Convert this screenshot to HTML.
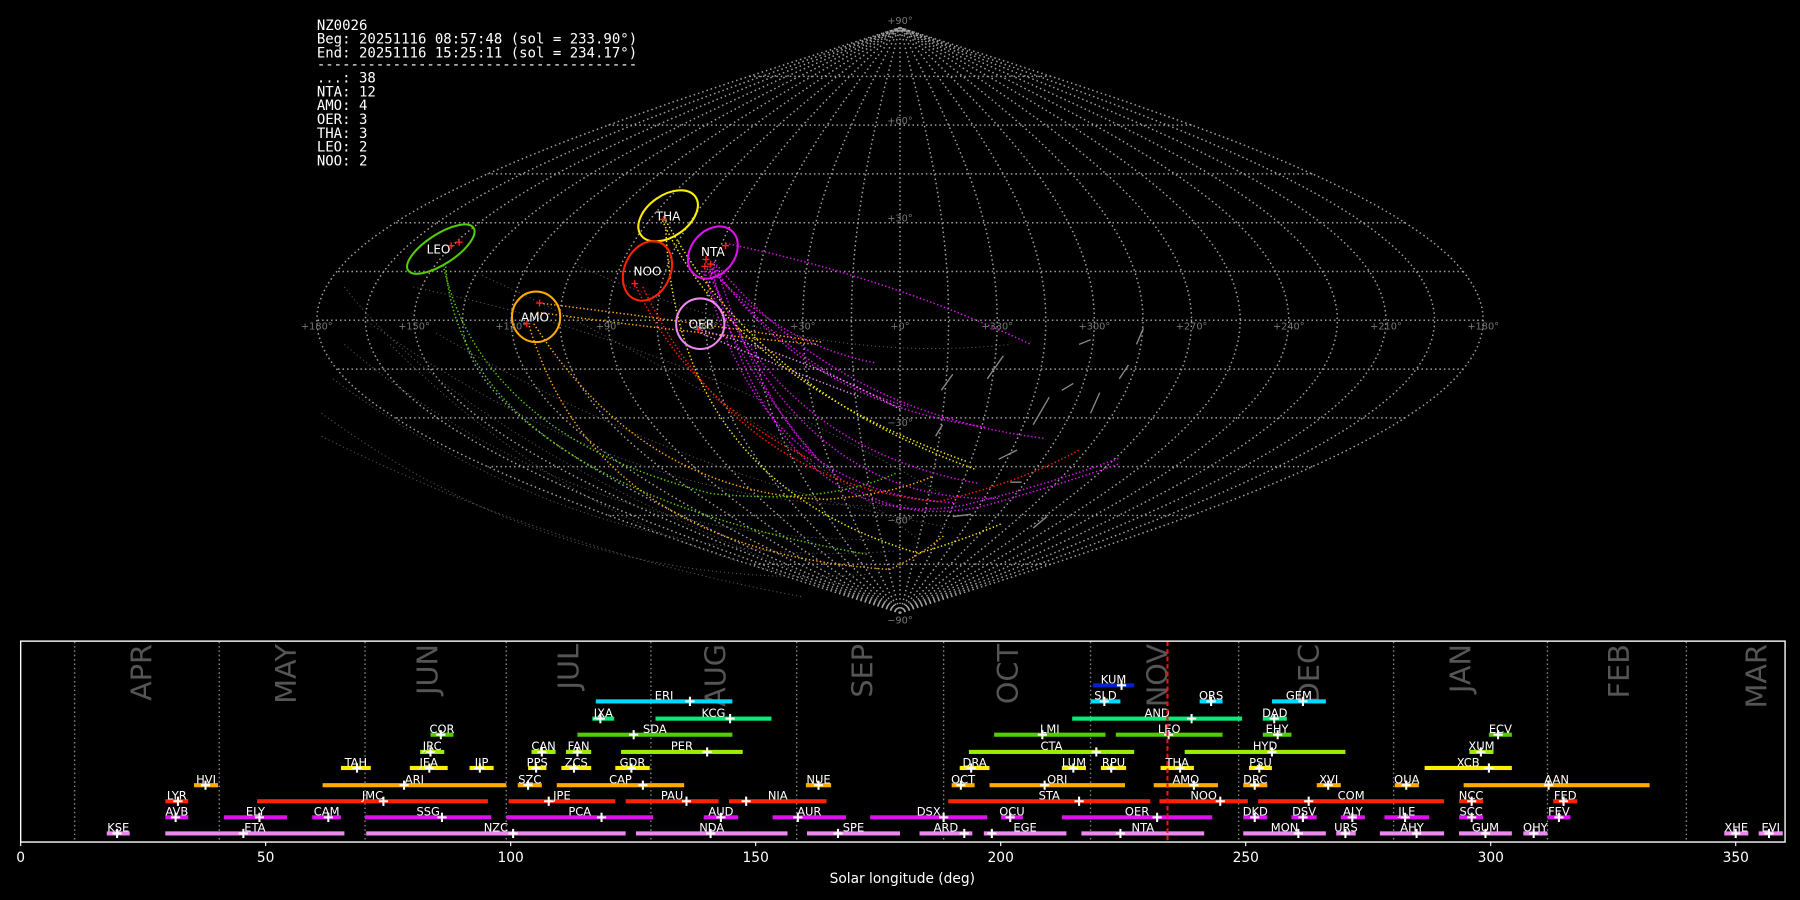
<!DOCTYPE html>
<html><head><meta charset="utf-8"><style>
html,body{margin:0;padding:0;background:#000;width:1800px;height:900px;overflow:hidden}
svg{display:block}
.sans{font-family:"DejaVu Sans","Liberation Sans",sans-serif}
.mono{font-family:"DejaVu Sans Mono","Liberation Mono",monospace}
</style></head><body>
<svg id="s" width="1800" height="900" viewBox="0 0 1568 784" xmlns="http://www.w3.org/2000/svg" class="sans">
<rect width="1568" height="784" fill="#000"/>
<g id="grid" fill="none" stroke="#a0a0a0" stroke-width="1.3" stroke-dasharray="1.3 2.6"></g>
<g id="bg" fill="none" stroke="#555" stroke-width="0.9" stroke-dasharray="1 2.5">
<path d="M300,300 Q500,470 760,470"/><path d="M290,330 Q520,500 780,480"/><path d="M320,280 Q560,450 790,440"/>
<path d="M280,360 Q500,520 760,500"/><path d="M360,250 Q600,300 820,430"/><path d="M420,240 Q620,330 800,470"/>
<path d="M300,250 Q400,380 700,500"/><path d="M340,300 Q520,480 740,510"/><path d="M500,230 Q700,320 880,300"/>
<path d="M280,380 Q480,480 700,520"/><path d="M380,290 Q600,420 830,460"/>
</g>
<g fill="none" stroke-width="1.3" stroke-dasharray="1.2 2">
<path stroke="#dd11ee" d="M632,212 Q770,240 898,300"/>
<path stroke="#dd11ee" d="M616,232 Q680,300 762,316"/>
<path stroke="#dd11ee" d="M618,232 Q700,330 791,354"/>
<path stroke="#dd11ee" d="M620,230 Q700,350 858,372"/>
<path stroke="#dd11ee" d="M622,228 Q730,360 911,382"/>
<path stroke="#dd11ee" d="M616,234 Q680,390 852,421"/>
<path stroke="#dd11ee" d="M614,236 Q660,430 833,438"/>
<path stroke="#dd11ee" d="M618,236 Q700,440 871,434"/>
<path stroke="#dd11ee" d="M620,234 Q680,470 840,440 Q920,420 975,399"/>
<path stroke="#dd11ee" d="M624,232 Q700,480 860,440 Q930,420 975,404"/>
<path stroke="#dd11ee" d="M612,236 Q650,330 712,399"/>
<path stroke="#ffee00" d="M577,192 Q640,330 842,402"/>
<path stroke="#ffee00" d="M580,192 Q660,340 850,409"/>
<path stroke="#ffee00" d="M580,200 Q590,420 800,482 Q840,470 873,456"/>
<path stroke="#ffaa00" d="M470,264 Q600,280 716,298"/>
<path stroke="#ffaa00" d="M468,272 Q600,290 712,300"/>
<path stroke="#ffaa00" d="M461,284 Q520,480 775,496 Q800,485 823,466"/>
<path stroke="#ffaa00" d="M465,282 Q560,430 720,435 Q780,430 812,415"/>
<path stroke="#55cc00" d="M388,229 Q400,420 756,483"/>
<path stroke="#55cc00" d="M386,231 Q420,380 620,430 Q720,440 781,412"/>
<path stroke="#ff2200" d="M553,247 Q600,350 708,401"/>
<path stroke="#ff2200" d="M560,250 Q640,420 817,437 Q890,420 940,392"/>
<path stroke="#ee88ee" d="M608,287 Q700,310 785,357"/>
<path stroke="#ee88ee" d="M610,290 Q680,320 750,346"/>
</g>
<g stroke="#888" stroke-width="1.2">
<path d="M820,340 l10,-14 M860,330 l14,-20 M900,370 l14,-24 M925,340 l10,-6 M870,400 l16,-8 M950,360 l8,-18 M975,330 l8,-12 M830,450 l16,-2 M940,300 l10,-4 M990,300 l6,-14 M815,380 l6,-10 M900,460 l12,-10 M880,420 l10,0"/>
</g>
<g fill="none" stroke-width="1.8">
<ellipse cx="384" cy="217" rx="34" ry="13" transform="rotate(-33 384 217)" stroke="#55cc00"/>
<ellipse cx="582" cy="188" rx="29" ry="18" transform="rotate(-35 582 188)" stroke="#ffee00"/>
<ellipse cx="621" cy="220" rx="25" ry="19" transform="rotate(-50 621 220)" stroke="#dd11ee"/>
<ellipse cx="564" cy="236" rx="20" ry="27" transform="rotate(25 564 236)" stroke="#ff2200"/>
<ellipse cx="467" cy="276" rx="21" ry="22" stroke="#ffaa00"/>
<ellipse cx="610" cy="282" rx="21" ry="22" stroke="#ee88ee"/>
</g>
<g fill="#fff" font-size="10.5" text-anchor="middle">
<text x="382" y="221">LEO</text><text x="582" y="192">THA</text><text x="621" y="223">NTA</text>
<text x="564" y="240">NOO</text><text x="466" y="280">AMO</text><text x="611" y="286">OER</text>
</g>
<g stroke="#ff2020" stroke-width="1.2">
<path d="M390,214h6m-3,-3v6 M397,211h6m-3,-3v6 M575,191h6m-3,-3v6 M550,247h6m-3,-3v6 M629,214h6m-3,-3v6 M612,226h6m-3,-3v6 M616,230h6m-3,-3v6 M611,232h6m-3,-3v6 M467,264h6m-3,-3v6 M456,282h6m-3,-3v6 M605,287h6m-3,-3v6"/>
</g>
<g fill="#777" font-size="8.5" text-anchor="middle" id="glab">
<text x="784" y="21">+90°</text><text x="784" y="108">+60°</text><text x="784" y="193">+30°</text>
<text x="784" y="371">−30°</text><text x="784" y="456">−60°</text><text x="784" y="543">−90°</text>
</g>
<g class="mono" fill="#fff" font-size="12.2">
<text x="276" y="26">NZ0026</text>
<text x="276" y="38">Beg: 20251116 08:57:48 (sol = 233.90°)</text>
<text x="276" y="50">End: 20251116 15:25:11 (sol = 234.17°)</text>
<text x="276" y="60">--------------------------------------</text>
<text x="276" y="72">...: 38</text>
<text x="276" y="84">NTA: 12</text>
<text x="276" y="96">AMO: 4</text>
<text x="276" y="108">OER: 3</text>
<text x="276" y="120">THA: 3</text>
<text x="276" y="132">LEO: 2</text>
<text x="276" y="144">NOO: 2</text>
</g>
<g id="months"></g>
<g id="bars"></g>
<line x1="1017" y1="559" x2="1017" y2="733" stroke="#ff1010" stroke-width="1.8" stroke-dasharray="4 2.5"/>
<rect x="18" y="558.5" width="1537" height="175" fill="none" stroke="#fff" stroke-width="1.2"/>
<g id="ticks" fill="#fff" font-size="12" text-anchor="middle"></g>
<text x="786" y="769" fill="#fff" font-size="12" text-anchor="middle">Solar longitude (deg)</text>
</svg>
<script>
var NS="http://www.w3.org/2000/svg";
function el(t,a,p,txt){var e=document.createElementNS(NS,t);for(var k in a)e.setAttribute(k,a[k]);if(txt!=null)e.textContent=txt;p.appendChild(e);return e;}
var g=document.getElementById('grid');
var cx=784,cy=279,RX=508/180,RY=255/90;
function P(l,p){return [cx-l*Math.cos(p*Math.PI/180)*RX, cy-p*RY];}
for(var l=-180;l<=180;l+=15){var d="";for(var p=-90;p<=90;p+=2){var q=P(l,p);d+=(p==-90?"M":"L")+q[0].toFixed(1)+","+q[1].toFixed(1);}el('path',{d:d},g);}
for(var p=-75;p<=75;p+=15){var a=P(-180,p),b=P(180,p);el('path',{d:"M"+a[0]+","+a[1]+"L"+b[0]+","+b[1]},g);}
var gl=document.getElementById('glab');
var labs=["+180","+150","+120","+90","+60","+30","+0","+330","+300","+270","+240","+210","+180"];
for(var i=0;i<13;i++){el('text',{x:276+i*84.67,y:287},gl,labs[i]+"°");}
var m=document.getElementById('months');
[65,191,318,441,567,694,822,950,1079,1214,1348,1469].forEach(function(x){el('line',{x1:x,y1:559,x2:x,y2:733,stroke:"#888","stroke-width":1.2,"stroke-dasharray":"1.3 2.5"},m);});
[["APR",123],["MAY",249],["JUN",372],["JUL",495],["AUG",623],["SEP",751],["OCT",878],["NOV",1008],["DEC",1140],["JAN",1272],["FEB",1410],["MAR",1530]].forEach(function(a){el('text',{transform:"translate("+(a[1]+9)+",561) rotate(-90)","text-anchor":"end",fill:"#555","font-size":"25"},m,a[0]);});
var C={c:"#00d8ff",s:"#00ee77",g:"#55cc00",l:"#99ee00",y:"#ffee00",o:"#ffaa00",r:"#ff2200",m:"#dd11ee",p:"#ee88ee",b:"#0022cc"};
var R=[
[597,"b",[["KUM",952,988,977]]],
[611,"c",[["ERI",519,638,601],["SLD",950,976,962],["ORS",1045,1065,1055],["GEM",1108,1155,1135]]],
[626,"s",[["JXA",516,535,523],["KCG",571,672,636],["AND",934,1082,1038],["DAD",1100,1121,1110]]],
[640,"g",[["COR",375,395,384],["SDA",503,638,552],["LMI",866,963,908],["LEO",972,1065,1018],["EHY",1100,1125,1113],["ECV",1297,1317,1305]]],
[655,"l",[["JRC",366,387,375],["CAN",463,484,472],["FAN",493,515,503],["PER",541,647,616],["CTA",844,988,955],["HYD",1032,1172,1108],["XUM",1280,1301,1290]]],
[669,"y",[["TAH",297,323,311],["JEA",357,390,374],["JIP",409,430,418],["PPS",460,476,467],["ZCS",489,515,500],["GDR",536,566,550],["DRA",836,862,846],["LUM",925,946,935],["RPU",959,981,968],["THA",1011,1040,1028],["PSU",1088,1108,1097],["XCB",1241,1317,1297]]],
[684,"o",[["HVI",169,190,179],["ARI",281,441,352],["SZC",451,472,460],["CAP",485,596,560],["NUE",702,724,713],["OCT",829,849,837],["ORI",862,980,910],["AMO",1005,1061,1040],["DRC",1083,1104,1093],["XVI",1147,1168,1157],["OUA",1215,1236,1225],["AAN",1275,1437,1349]]],
[698,"r",[["LYR",144,164,155],["JMC",224,425,334],["JPE",443,536,478],["PAU",545,626,598],["NIA",635,720,650],["STA",826,1002,940],["NOO",1010,1087,1063],["COM",1096,1258,1140],["NCC",1271,1292,1282],["FED",1353,1374,1362]]],
[712,"m",[["AVB",144,164,153],["ELY",195,250,226],["CAM",272,297,286],["SSG",318,428,385],["PCA",441,569,524],["AUD",613,643,628],["AUR",673,737,695],["DSX",758,860,822],["OCU",872,891,880],["OER",925,1056,1008],["DKD",1083,1104,1093],["DSV",1125,1147,1135],["ALY",1168,1189,1178],["JLE",1206,1245,1224],["SCC",1271,1292,1282],["FEV",1348,1368,1358]]],
[726,"p",[["KSE",93,113,102],["ETA",144,300,212],["NZC",319,545,447],["NDA",554,686,619],["SPE",703,784,730],["ARD",801,847,840],["EGE",857,929,864],["NTA",942,1049,976],["MON",1083,1155,1131],["URS",1164,1181,1172],["AHY",1202,1258,1234],["GUM",1271,1317,1294],["OHY",1327,1348,1336],["XHE",1502,1523,1512],["EVI",1532,1553,1541]]]];
var B=document.getElementById('bars');
R.forEach(function(r){var y=r[0],col=C[r[1]];r[2].forEach(function(s){
el('rect',{x:s[1],y:y-1.8,width:s[2]-s[1],height:3.6,fill:col},B);
el('path',{d:"M"+(s[3]-4)+","+y+"h8M"+s[3]+","+(y-4)+"v8",stroke:"#fff","stroke-width":1.8},B);
el('text',{x:(s[1]+s[2])/2,y:y-1.5,fill:"#fff","font-size":"10","text-anchor":"middle"},B,s[0]);});});
var T=document.getElementById('ticks');
for(var d=0;d<=350;d+=50){var x=18+d*4.2686;el('line',{x1:x,y1:733,x2:x,y2:737,stroke:"#fff","stroke-width":1},T);el('text',{x:x,y:751},T,d);}
</script>
</body></html>
